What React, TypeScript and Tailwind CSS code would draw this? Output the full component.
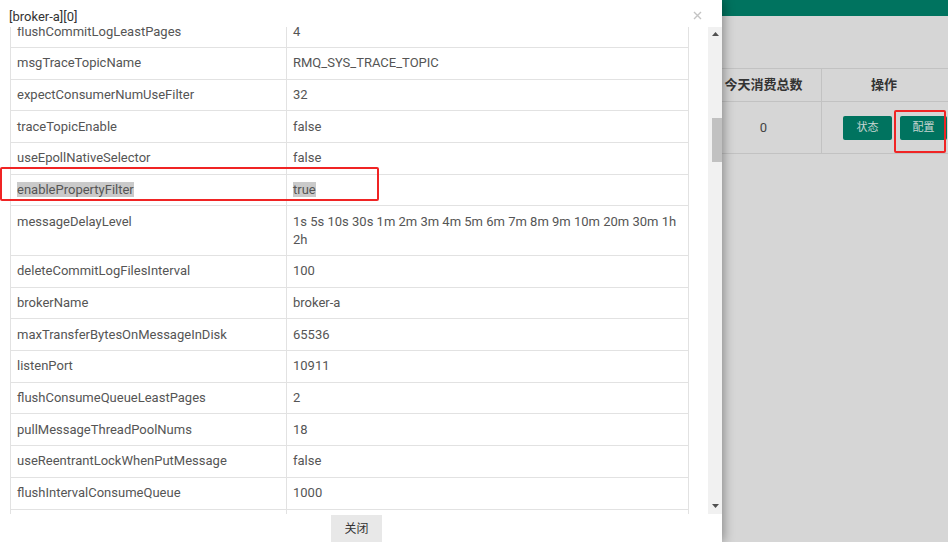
const rows: Array<[string, string]> = [
  ['flushCommitLogLeastPages', '4'],
  ['msgTraceTopicName', 'RMQ_SYS_TRACE_TOPIC'],
  ['expectConsumerNumUseFilter', '32'],
  ['traceTopicEnable', 'false'],
  ['useEpollNativeSelector', 'false'],
  ['enablePropertyFilter', 'true'],
  ['messageDelayLevel', '1s 5s 10s 30s 1m 2m 3m 4m 5m 6m 7m 8m 9m 10m 20m 30m 1h|2h'],
  ['deleteCommitLogFilesInterval', '100'],
  ['brokerName', 'broker-a'],
  ['maxTransferBytesOnMessageInDisk', '65536'],
  ['listenPort', '10911'],
  ['flushConsumeQueueLeastPages', '2'],
  ['pullMessageThreadPoolNums', '18'],
  ['useReentrantLockWhenPutMessage', 'false'],
  ['flushIntervalConsumeQueue', '1000'],
  ['flushCommitLogTimed', 'false'],
];

function ConfigRow({ name, value }: { name: string; value: string }) {
  const selected = name === 'enablePropertyFilter';
  const lines = value.split('|');
  return (
    <div className="flex border-b border-[#e2e2e2] leading-[18px]">
      <div className="w-[276px] shrink-0 border-r border-[#e2e2e2] pl-[6px] py-[6.35px]">
        {selected ? <span className="bg-[#cacaca]">{name}</span> : name}
      </div>
      <div className="flex-1 pl-[6px] pr-[6px] py-[6.35px]">
        {selected ? (
          <span className="bg-[#cacaca]">{value}</span>
        ) : (
          lines.map((l, i) => <div key={i}>{l}</div>)
        )}
      </div>
    </div>
  );
}

export default function App() {
  return (
    <div className="relative flex w-[948px] h-[542px] overflow-hidden bg-[#d6d6d6] font-['Roboto','Noto_Sans_CJK_SC',sans-serif]">
      {/* modal */}
      <div className="relative z-10 w-[722px] h-full shrink-0 bg-white flex flex-col shadow-[2px_0_10px_rgba(0,0,0,0.35)]">
        <div className="h-[27px] flex items-start justify-between shrink-0">
          <div className="pl-[9px] pt-[8px] text-[13px] leading-[18px] text-[#333]">[broker-a][0]</div>
          <svg className="mt-[11px] mr-[20px]" width="9" height="9" viewBox="0 0 9 9">
            <path d="M1 1L8 8M8 1L1 8" stroke="#c4c4c4" strokeWidth="1.4" />
          </svg>
        </div>

        <div className="flex h-[487px] shrink-0">
          <div className="w-[679px] ml-[10px] overflow-hidden border-l border-r border-[#e2e2e2]">
            <div className="-mt-[10.8px] text-[13px] text-[#555]">
              {rows.map(([n, v]) => (
                <ConfigRow key={n} name={n} value={v} />
              ))}
            </div>
          </div>
          {/* scrollbar */}
          <div className="ml-[19px] w-[14px] bg-[#f1f1f1] flex flex-col items-center">
            <svg className="mt-[5px]" width="7" height="4" viewBox="0 0 7 4">
              <path d="M0 4L3.5 0L7 4Z" fill="#505050" />
            </svg>
            <div className="mt-[82px] ml-[3px] w-[10px] h-[44px] bg-[#c1c1c1]" />
            <div className="flex-1" />
            <svg className="mb-[6px]" width="7" height="4" viewBox="0 0 7 4">
              <path d="M0 0L3.5 4L7 0Z" fill="#505050" />
            </svg>
          </div>
        </div>

        <div className="flex-1 pl-[331px] pt-[1px]">
          <button className="w-[51px] h-[30px] bg-[#e8e8e8] text-[12px] text-[#333] pb-[2px]">关闭</button>
        </div>
      </div>

      {/* page behind the overlay */}
      <div className="flex-1 flex flex-col">
        <div className="h-[16px] bg-[#00735f]" />
        <div className="mt-[52px] -ml-[16px] border-t border-[#c2c2c2]">
          <div className="flex h-[33px] border-b border-[#c2c2c2] text-[13px] font-bold text-[#333]">
            <div className="w-[116px] flex items-center justify-center border-r border-[#c2c2c2]">今天消费总数</div>
            <div className="flex-1 flex items-center justify-center pr-[2px]">操作</div>
          </div>
          <div className="flex h-[52px] border-b border-[#c2c2c2] text-[13px] text-[#444]">
            <div className="w-[116px] flex items-center justify-center border-r border-[#c2c2c2]">0</div>
            <div className="flex-1 flex items-start pt-[14px] pl-[21px] gap-[8px]">
              <div className="w-[49px] h-[24px] rounded-[2px] bg-[#00735f] text-[#c8d6d2] text-[11px] flex items-center justify-center">状态</div>
              <div className="w-[47px] h-[24px] rounded-[2px] bg-[#00735f] text-[#c8d6d2] text-[11px] flex items-center justify-center">配置</div>
            </div>
          </div>
        </div>
      </div>

      {/* annotation boxes */}
      <div className="absolute z-20 left-0 top-[167px] w-[379px] h-[34px] border-2 border-[#f02424] rounded-[2px]" />
      <div className="absolute z-20 left-[894px] top-[110px] w-[52px] h-[43px] border-2 border-[#f02424] rounded-[2px]" />
    </div>
  );
}
